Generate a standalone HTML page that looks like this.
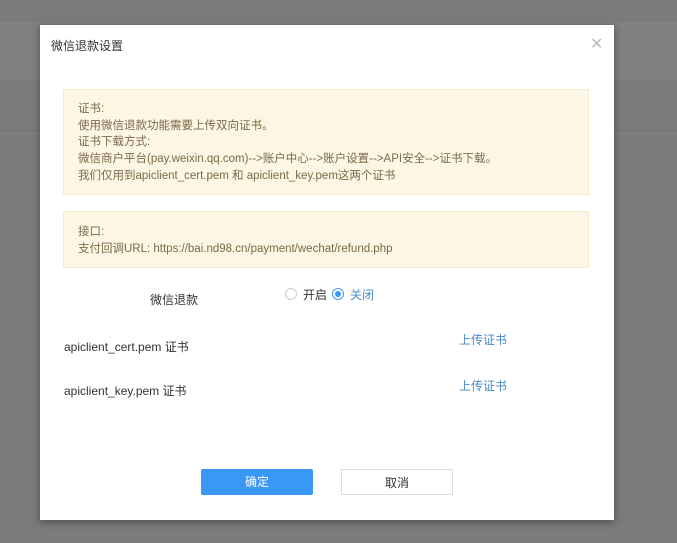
<!DOCTYPE html>
<html><head><meta charset="utf-8"><style>
body{margin:0;width:677px;height:543px;overflow:hidden;background:#7b7b7b;font-family:"Liberation Sans","Noto Sans CJK SC",sans-serif;font-size:12px;position:relative}
.b{position:absolute;left:0;width:677px}
.dlg{position:absolute;left:40px;top:25px;width:574px;height:495px;background:#fff;box-shadow:0 2px 8px rgba(0,0,0,.4)}
.t{position:absolute;left:11px;top:12px;font-size:12px;color:#333}
.x{position:absolute;left:550px;top:9px;font-size:16px;color:#bbb}
.box{position:absolute;left:23px;width:526px;background:#fcf6e4;border:1px solid #f3ead0;border-radius:2px;color:#7a6a4a;line-height:16.7px;padding:10px 14px;box-sizing:border-box;font-size:11.5px}
.a{position:absolute;color:#333}
.l{position:absolute;color:#4a8ac9}
.r{position:absolute;width:12px;height:12px;border:1px solid #ccc;border-radius:50%;box-sizing:border-box}
.btn{position:absolute;top:444px;width:112px;height:26px;line-height:26px;text-align:center;box-sizing:border-box}
</style></head><body>
<div class="b" style="top:22px;height:56px;background:#808080;border-top:1px solid #858585;border-bottom:1px solid #858585"></div>
<div class="b" style="top:133px;height:1px;background:#858585"></div>
<div class="dlg">
<div class="t">微信退款设置</div>
<div class="x">✕</div>
<div class="box" style="top:64px;height:106px;padding-top:11px">证书:<br>使用微信退款功能需要上传双向证书。<br>证书下载方式:<br>微信商户平台(pay.weixin.qq.com)--&gt;账户中心--&gt;账户设置--&gt;API安全--&gt;证书下载。<br>我们仅用到apiclient_cert.pem 和 apiclient_key.pem这两个证书</div>
<div class="box" style="top:186px;height:57px;padding-top:12px">接口:<br>支付回调URL: https://bai.nd98.cn/payment/wechat/refund.php</div>
<div class="a" style="left:110px;top:266px">微信退款</div>
<div class="r" style="left:245px;top:263px"></div>
<div class="a" style="left:263px;top:261px">开启</div>
<div class="r" style="left:292px;top:263px;border-color:#3a97f5"><div style="position:absolute;left:2px;top:2px;width:6px;height:6px;border-radius:50%;background:#3a97f5"></div></div>
<div class="l" style="left:310px;top:261px">关闭</div>
<div class="a" style="left:24px;top:313px">apiclient_cert.pem 证书</div>
<div class="l" style="left:419px;top:306px">上传证书</div>
<div class="a" style="left:24px;top:357px">apiclient_key.pem 证书</div>
<div class="l" style="left:419px;top:352px">上传证书</div>
<div class="btn" style="left:161px;background:#3a97f5;color:#fff;border-radius:2px">确定</div>
<div class="btn" style="left:301px;border:1px solid #ddd;color:#333">取消</div>
</div>
</body></html>
